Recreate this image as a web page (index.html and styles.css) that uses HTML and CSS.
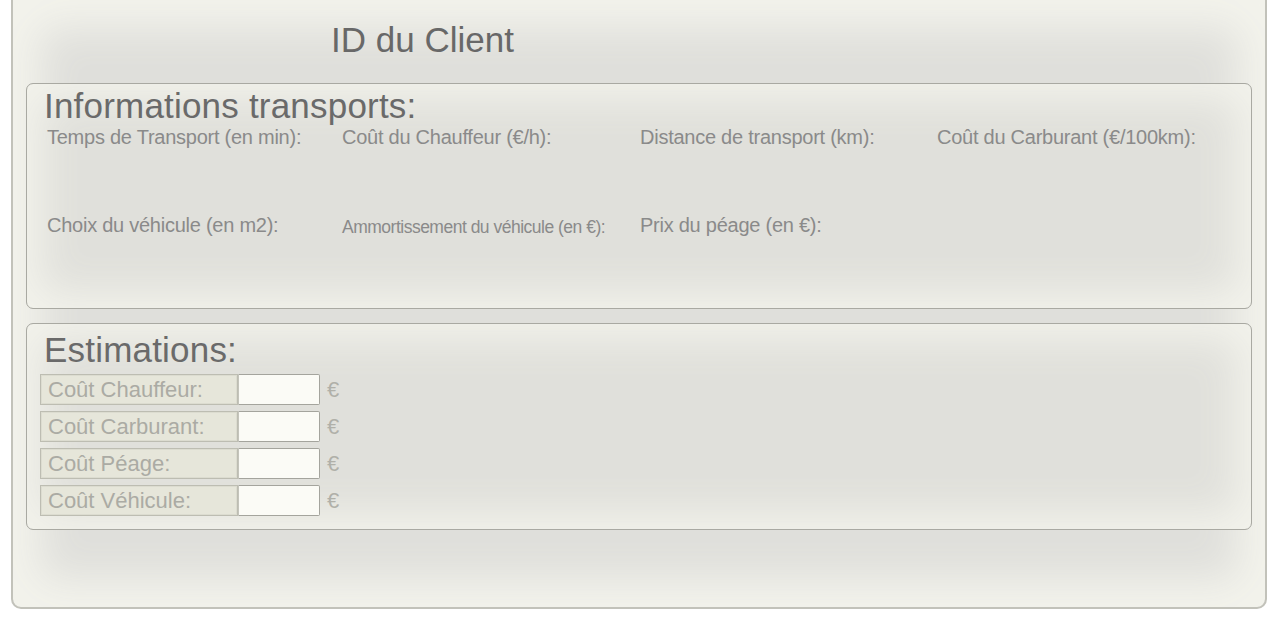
FILE: index.html
```html
<!DOCTYPE html>
<html lang="fr">
<head>
<meta charset="utf-8">
<title>Estimation transport</title>
<link rel="stylesheet" href="styles.css">
</head>
<body>
<div class="page">
  <div class="client"><span class="client-title">ID du Client</span></div>
  <section class="box box-info">
    <h2 class="box-title">Informations transports:</h2>
    <div class="fields">
      <div class="field"><span class="field-label">Temps de Transport (en min):</span></div>
      <div class="field"><span class="field-label">Coût du Chauffeur (€/h):</span></div>
      <div class="field"><span class="field-label">Distance de transport (km):</span></div>
      <div class="field"><span class="field-label">Coût du Carburant (€/100km):</span></div>
      <div class="field"><span class="field-label">Choix du véhicule (en m2):</span></div>
      <div class="field"><span class="field-label field-label-small">Ammortissement du véhicule (en €):</span></div>
      <div class="field"><span class="field-label">Prix du péage (en €):</span></div>
    </div>
  </section>
  <section class="box box-est">
    <h2 class="box-title box-title-est">Estimations:</h2>
    <div class="est-list">
      <div class="est-row"><span class="est-label">Coût Chauffeur:</span><span class="est-input"></span><span class="est-unit">€</span></div>
      <div class="est-row"><span class="est-label">Coût Carburant:</span><span class="est-input"></span><span class="est-unit">€</span></div>
      <div class="est-row"><span class="est-label">Coût Péage:</span><span class="est-input"></span><span class="est-unit">€</span></div>
      <div class="est-row"><span class="est-label">Coût Véhicule:</span><span class="est-input"></span><span class="est-unit">€</span></div>
    </div>
  </section>
</div>
</body>
</html>
```

FILE: styles.css
```css
html, body {
  margin: 0;
  padding: 0;
  background: #ffffff;
  font-family: "Liberation Sans", Arial, sans-serif;
}

.page {
  margin: 0 13px 0 11px;
  height: 609px;
  box-sizing: border-box;
  border: 2px solid #c2c2ba;
  border-top: none;
  border-radius: 0 0 10px 10px;
  background: #dfdfdb;
  box-shadow: inset 0 0 40px 28px #f3f3ec;
  padding: 0 13px;
  overflow: hidden;
}

.client {
  height: 83px;
  padding-left: 305px;
  box-sizing: border-box;
  padding-top: 20px;
}

.client-title {
  font-size: 35px;
  line-height: 40px;
  color: #686868;
}

.box {
  border: 1px solid #a9a9a2;
  border-radius: 7px;
  background: #e0e0db;
  box-shadow: inset 0 0 40px 14px #f3f3ec;
  box-sizing: border-box;
}

.box-info {
  height: 226px;
  padding: 2px 17px 0;
}

.box-est {
  margin-top: 14px;
  height: 207px;
  padding: 6px 13px 0;
}

.box-title {
  margin: 0;
  font-weight: normal;
  font-size: 35px;
  line-height: 40px;
  letter-spacing: 0.2px;
  color: #6a6a6a;
}

.box-title-est {
  padding-left: 4px;
}

.fields {
  display: grid;
  grid-template-columns: 295px 298px 297px 297px;
  grid-auto-rows: 88px;
}

.field {
  padding-left: 3px;
}

.field-label {
  display: block;
  font-size: 20px;
  line-height: 23px;
  letter-spacing: -0.25px;
  color: #8a8a8a;
  white-space: nowrap;
}

.field-label-small {
  font-size: 17.5px;
  letter-spacing: -0.5px;
  padding-top: 2px;
}

.est-list {
  display: flex;
  flex-direction: column;
  gap: 6px;
  padding-top: 4px;
}

.est-row {
  display: flex;
  align-items: stretch;
  height: 31px;
}

.est-label {
  width: 198px;
  box-sizing: border-box;
  border: 1px solid #bdbdb2;
  box-shadow: inset 0 0 0 1px #dcdcd0;
  background: #e6e6da;
  color: #ababa4;
  font-size: 22px;
  line-height: 29px;
  padding-left: 7px;
  white-space: nowrap;
}

.est-input {
  width: 82px;
  box-sizing: border-box;
  border: 1px solid #a4a49d;
  border-left-color: #c4c4bb;
  border-radius: 0 2px 2px 0;
  background: #fbfbf6;
}

.est-unit {
  padding-left: 7px;
  font-size: 22px;
  line-height: 31px;
  color: #b0b0a9;
}
```
